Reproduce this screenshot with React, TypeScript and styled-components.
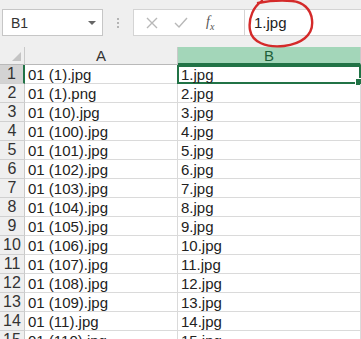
import React from "react";
import styled, { createGlobalStyle } from "styled-components";

const GlobalStyle = createGlobalStyle`
  html, body { margin: 0; padding: 0; background: #ffffff; }
  body { font-family: "Liberation Sans", Arial, sans-serif; }
`;

const Root = styled.div`
  position: relative;
  width: 361px;
  height: 339px;
  overflow: hidden;
  background: #ffffff;
`;

const Toolbar = styled.div`
  display: flex;
  align-items: flex-start;
  height: 47px;
  box-sizing: border-box;
  padding: 9px 0 0 2px;
  background: #efefef;
`;

const NameBox = styled.div`
  box-sizing: border-box;
  width: 101px;
  height: 27px;
  border: 1px solid #c6c6c6;
  background: #ffffff;
  display: flex;
  align-items: center;
  justify-content: space-between;
  padding: 0 6px 0 8px;
  font-size: 14px;
  color: #333;
`;

const Caret = styled.span`
  width: 0;
  height: 0;
  border-left: 4px solid transparent;
  border-right: 4px solid transparent;
  border-top: 4px solid #666;
`;

const Grip = styled.div`
  width: 30px;
  height: 27px;
  display: flex;
  flex-direction: column;
  align-items: center;
  justify-content: center;
  gap: 2px;
  span {
    width: 2px;
    height: 2px;
    background: #b4b4b4;
  }
`;

const FormulaBar = styled.div`
  flex: 1;
  display: flex;
  height: 27px;
  box-sizing: border-box;
  border: 1px solid #d4d4d4;
  border-right: none;
  background: #ffffff;
`;

const IconStrip = styled.div`
  display: flex;
  align-items: center;
  width: 111px;
  padding-left: 12px;
  gap: 16px;
  border-right: 1px solid #d4d4d4;
  box-sizing: border-box;
`;

const Fx = styled.span`
  font-family: "Liberation Serif", "Times New Roman", serif;
  font-style: italic;
  font-size: 14px;
  color: #555;
  margin-left: 2px;
`;

const FormulaText = styled.div`
  flex: 1;
  display: flex;
  align-items: center;
  padding-left: 9px;
  font-size: 15px;
  color: #222;
`;

const Grid = styled.div`
  display: grid;
  grid-template-columns: 25px 153px 183px;
  grid-auto-rows: 19px;
  grid-template-rows: 18px;
`;

const Corner = styled.div`
  position: relative;
  background: #efefef;
  border-right: 1px solid #c9c9c9;
  border-bottom: 1px solid #b9b9b9;
  box-sizing: border-box;
  &::after {
    content: "";
    position: absolute;
    right: 3px;
    bottom: 3px;
    width: 0;
    height: 0;
    border-left: 9px solid transparent;
    border-bottom: 9px solid #c4c4c4;
  }
`;

const ColHeader = styled.div<{ $active?: boolean }>`
  box-sizing: border-box;
  display: flex;
  align-items: center;
  justify-content: center;
  font-size: 15px;
  color: ${(p) => (p.$active ? "#1e5f3a" : "#333")};
  background: ${(p) => (p.$active ? "#a3d6b9" : "#efefef")};
  border-right: 1px solid #c9c9c9;
  border-bottom: ${(p) => (p.$active ? "2px solid #217346" : "1px solid #b9b9b9")};
`;

const RowHeader = styled.div<{ $active?: boolean }>`
  box-sizing: border-box;
  display: flex;
  align-items: center;
  justify-content: center;
  font-size: 16px;
  color: #333;
  background: ${(p) => (p.$active ? "#d3d3d3" : "#efefef")};
  border-right: ${(p) => (p.$active ? "2px solid #217346" : "1px solid #c9c9c9")};
  border-bottom: 1px solid #d0d0d0;
`;

const Cell = styled.div<{ $selected?: boolean }>`
  position: relative;
  box-sizing: border-box;
  display: flex;
  align-items: center;
  padding-left: ${(p) => (p.$selected ? "2px" : "3px")};
  font-size: 15px;
  color: #222;
  white-space: nowrap;
  border-right: 1px solid #dadada;
  border-bottom: 1px solid #dadada;
  ${(p) =>
    p.$selected &&
    `
    border: 2px solid #217346;
    margin-left: -1px;
  `}
`;

const Handle = styled.span`
  position: absolute;
  right: -4px;
  bottom: -4px;
  width: 6px;
  height: 6px;
  background: #217346;
  border: 1px solid #ffffff;
`;

const Scribble = styled.svg`
  position: absolute;
  left: 0;
  top: 0;
  pointer-events: none;
`;

const aNames = [
  "01 (1).jpg",
  "01 (1).png",
  "01 (10).jpg",
  "01 (100).jpg",
  "01 (101).jpg",
  "01 (102).jpg",
  "01 (103).jpg",
  "01 (104).jpg",
  "01 (105).jpg",
  "01 (106).jpg",
  "01 (107).jpg",
  "01 (108).jpg",
  "01 (109).jpg",
  "01 (11).jpg",
  "01 (110).jpg",
];

export default function App() {
  return (
    <Root>
      <GlobalStyle />
      <Toolbar>
        <NameBox>
          <span>B1</span>
          <Caret />
        </NameBox>
        <Grip>
          <span />
          <span />
          <span />
        </Grip>
        <FormulaBar>
          <IconStrip>
            <svg width="12" height="12" viewBox="0 0 12 12">
              <path d="M1 1 L11 11 M11 1 L1 11" stroke="#b8b8b8" strokeWidth="1.4" fill="none" />
            </svg>
            <svg width="14" height="12" viewBox="0 0 14 12">
              <path d="M1 6 L5 10 L13 1" stroke="#b8b8b8" strokeWidth="1.4" fill="none" />
            </svg>
            <Fx>
              f<sub style={{ fontSize: 10 }}>x</sub>
            </Fx>
          </IconStrip>
          <FormulaText>1.jpg</FormulaText>
        </FormulaBar>
      </Toolbar>
      <Grid>
        <Corner />
        <ColHeader>A</ColHeader>
        <ColHeader $active>B</ColHeader>
        {aNames.map((name, i) => (
          <React.Fragment key={name}>
            <RowHeader $active={i === 0}>{i + 1}</RowHeader>
            <Cell>{name}</Cell>
            <Cell $selected={i === 0}>
              {i + 1}.jpg
              {i === 0 && <Handle />}
            </Cell>
          </React.Fragment>
        ))}
      </Grid>
      <Scribble width="361" height="60" viewBox="0 0 361 60">
        <path
          d="M262 1 C254 6, 248 18, 250 30 C252 42, 266 48, 284 46 C300 44, 314 36, 312 20 C311 9, 303 2, 292 1 C280 0, 268 1, 258 3"
          stroke="#d42a2a"
          strokeWidth="2.4"
          fill="none"
          strokeLinecap="round"
        />
      </Scribble>
    </Root>
  );
}
